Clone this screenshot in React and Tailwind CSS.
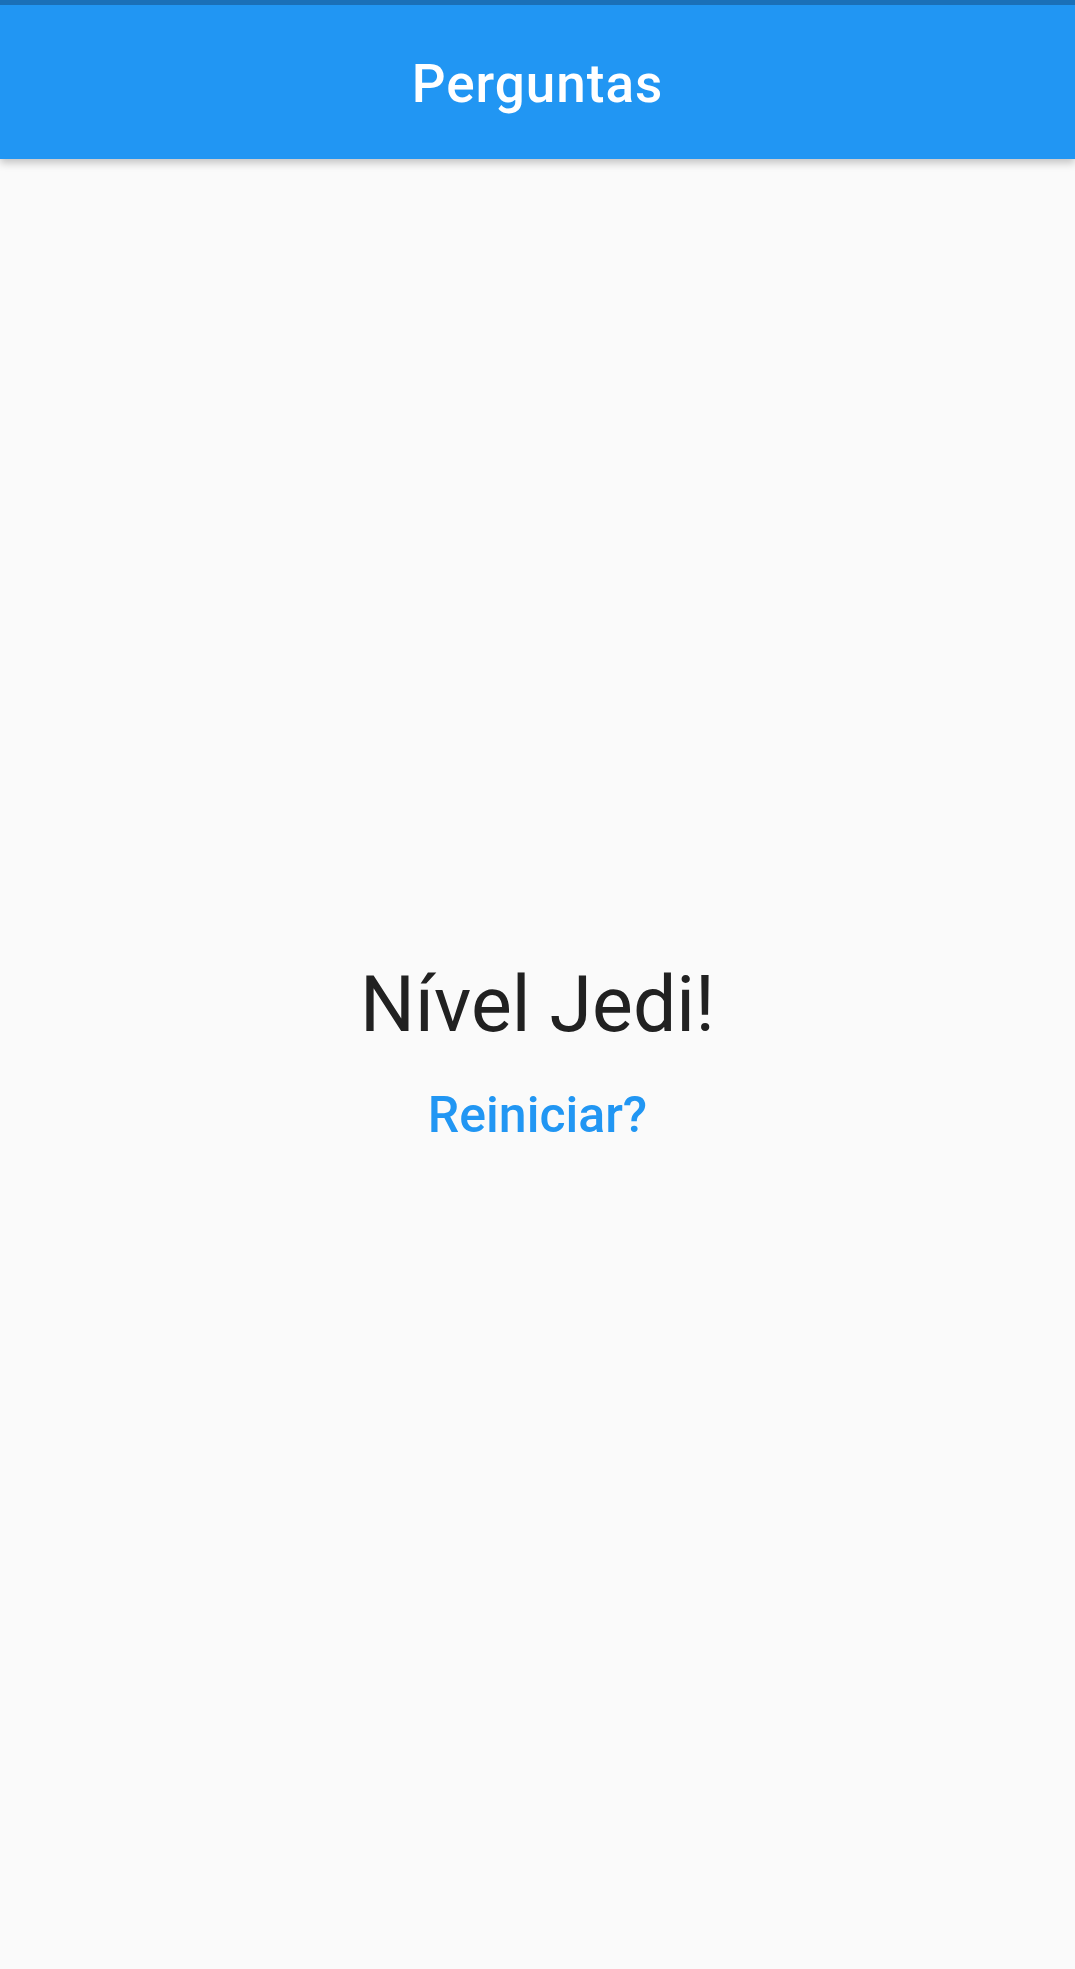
import React from "react";

export default function App() {
  return (
    <div className="min-h-screen flex flex-col bg-[#fafafa] font-['Roboto',sans-serif]">
      {/* status strip + app bar */}
      <div className="relative z-10 shadow-[0_4px_8px_rgba(0,0,0,0.22)]">
        <div className="h-[5px] bg-[#1a70b8]" />
        <header className="h-[154px] bg-[#2196f3] flex items-center justify-center pt-[5px]">
          <h1 className="text-white text-[53px] leading-[61px] font-medium tracking-[1px]">
            Perguntas
          </h1>
        </header>
      </div>

      {/* result */}
      <main className="flex-1 flex flex-col items-center justify-center pt-[13px]">
        <p className="text-[#212121] text-[77px] leading-[90px]">Nível Jedi!</p>
        <button className="py-[36px] px-6 text-[#2196f3] text-[50px] leading-[59px] font-medium">
          Reiniciar?
        </button>
      </main>
    </div>
  );
}
